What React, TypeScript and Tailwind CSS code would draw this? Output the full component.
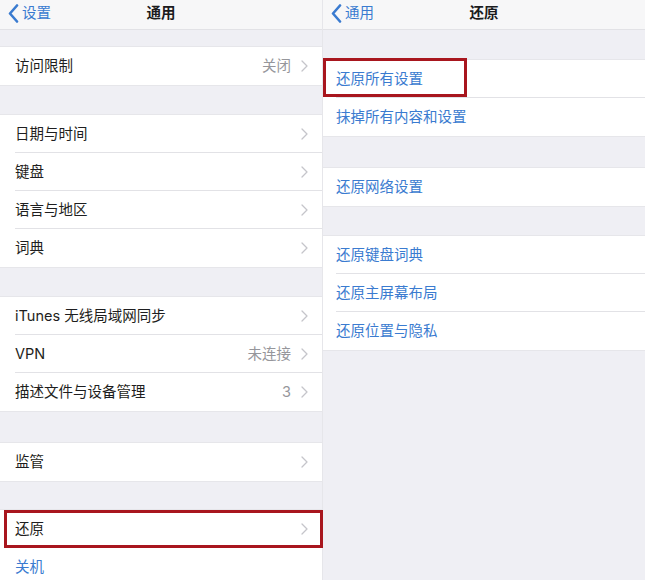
import React from 'react';

const FONT = { fontFamily: 'Inter, "Noto Sans CJK SC", "Noto Sans", sans-serif' };

type Row = {
  label: string;
  value?: string;
  chevron?: boolean;
  blue?: boolean;
  boxed?: 'left' | 'right';
};

function Chevron() {
  return (
    <svg width="7" height="12" viewBox="0 0 7 12" className="shrink-0">
      <path d="M1 1l5 5-5 5" fill="none" stroke="#c5c5ca" strokeWidth="1.3" strokeLinecap="round" strokeLinejoin="round" />
    </svg>
  );
}

function BackChevron() {
  return (
    <svg width="11" height="19" viewBox="0 0 11 19" className="shrink-0">
      <path d="M9 1.5L2 9.5l7 8" fill="none" stroke="#3a7bd0" strokeWidth="2.6" strokeLinecap="round" strokeLinejoin="round" />
    </svg>
  );
}

function NavBar({ back, title }: { back: string; title: string }) {
  return (
    <div className="relative h-[30px] shrink-0 bg-[#f7f7f8] border-b border-[#e2e2e6] flex items-center pb-[3px]">
      <div className="flex items-center gap-[3px] pl-[8px] text-[14.5px] text-[#3a7bd0]">
        <BackChevron />
        <span className="leading-none">{back}</span>
      </div>
      <div className="absolute inset-x-0 top-0 h-full flex items-center justify-center pb-[3px] pointer-events-none">
        <span className="text-[14.5px] font-semibold text-[#1c1c1e]">{title}</span>
      </div>
    </div>
  );
}

function Group({ rows, inset }: { rows: Row[]; inset: number }) {
  return (
    <div className="bg-white shadow-[0_-1px_0_#e6e6ea,0_1px_0_#e6e6ea]">
      {rows.map((r, i) => (
        <div key={r.label} className="relative h-[38px]">
          <div className={`h-full flex items-center pr-[14px] ${inset === 15 ? 'pl-[15px]' : 'pl-[13px]'}`}>
            <span className={`flex-1 text-[14.5px] ${r.blue ? 'text-[#3a7bd0]' : 'text-[#1e1e20]'}`}>{r.label}</span>
            {r.value && <span className="text-[14.5px] text-[#96969b] mr-[10px]">{r.value}</span>}
            {r.chevron && <Chevron />}
          </div>
          {i < rows.length - 1 && (
            <div className={`absolute bottom-0 right-0 h-px bg-[#e2e2e6] ${inset === 15 ? 'left-[15px]' : 'left-[13px]'}`} />
          )}
          {r.boxed === 'left' && (
            <div className="absolute left-[4px] right-[-1px] top-0 bottom-0 border-[3px] border-[#a8161e]" />
          )}
          {r.boxed === 'right' && (
            <div className="absolute left-0 w-[144px] top-[-2px] h-[39px] border-[3px] border-[#a8161e]" />
          )}
        </div>
      ))}
    </div>
  );
}

export default function App() {
  const left: Row[][] = [
    [{ label: '访问限制', value: '关闭', chevron: true }],
    [
      { label: '日期与时间', chevron: true },
      { label: '键盘', chevron: true },
      { label: '语言与地区', chevron: true },
      { label: '词典', chevron: true },
    ],
    [
      { label: 'iTunes 无线局域网同步', chevron: true },
      { label: 'VPN', value: '未连接', chevron: true },
      { label: '描述文件与设备管理', value: '3', chevron: true },
    ],
    [{ label: '监管', chevron: true }],
  ];

  const right: Row[][] = [
    [
      { label: '还原所有设置', blue: true, boxed: 'right' },
      { label: '抹掉所有内容和设置', blue: true },
    ],
    [{ label: '还原网络设置', blue: true }],
    [
      { label: '还原键盘词典', blue: true },
      { label: '还原主屏幕布局', blue: true },
      { label: '还原位置与隐私', blue: true },
    ],
  ];

  return (
    <div className="w-[645px] h-[580px] overflow-hidden flex bg-[#efeff4]" style={FONT}>
      <div className="w-[322px] shrink-0 flex flex-col">
        <NavBar back="设置" title="通用" />
        <div className="h-[17px] shrink-0" />
        <Group rows={left[0]} inset={15} />
        <div className="h-[30px] shrink-0" />
        <Group rows={left[1]} inset={15} />
        <div className="h-[30px] shrink-0" />
        <Group rows={left[2]} inset={15} />
        <div className="h-[32px] shrink-0" />
        <Group rows={left[3]} inset={15} />
        <div className="h-[29px] shrink-0" />
        <Group
          rows={[
            { label: '还原', chevron: true, boxed: 'left' },
            { label: '关机', blue: true },
          ]}
          inset={15}
        />
      </div>
      <div className="flex-1 flex flex-col border-l border-[#e6e6ea]">
        <NavBar back="通用" title="还原" />
        <div className="h-[30px] shrink-0" />
        <Group rows={right[0]} inset={13} />
        <div className="h-[32px] shrink-0" />
        <Group rows={right[1]} inset={13} />
        <div className="h-[30px] shrink-0" />
        <Group rows={right[2]} inset={13} />
      </div>
    </div>
  );
}
